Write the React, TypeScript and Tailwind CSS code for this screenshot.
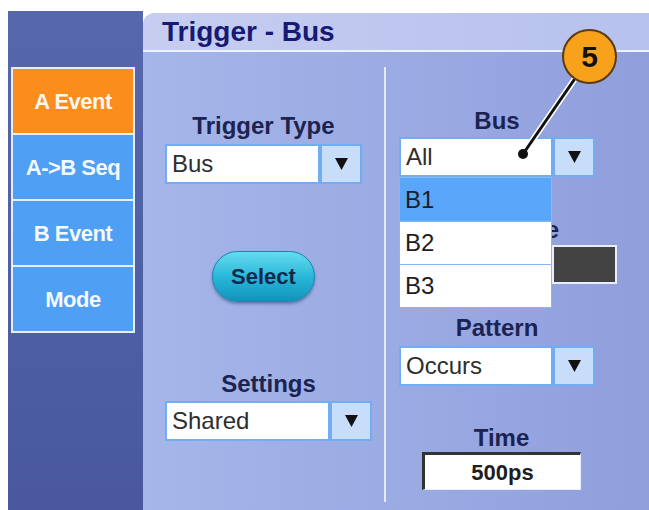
import React from 'react';

type DropdownProps = {
  value: string;
  boxClass: string;
  list?: string[];
};

const Arrow = () => (
  <svg width="13" height="12" viewBox="0 0 13 12">
    <polygon points="0,0 13,0 6.5,12" fill="#111" />
  </svg>
);

const Dropdown: React.FC<DropdownProps> = ({ value, boxClass, list }) => (
  <div className="relative flex h-[40px]">
    <div className={`${boxClass} flex items-center border-2 border-[#72acf2] bg-white pl-[5px] text-[24px] leading-none text-[#2e2e2e]`}>
      {value}
    </div>
    <div className="flex w-[42px] items-center justify-center border-2 border-[#72acf2] bg-[#c7ddf9]">
      <Arrow />
    </div>
    {list && (
      <div className="absolute left-0 top-[40px] z-10 w-[153px] border border-[#86b8f2] bg-white">
        {list.map((item, i) => (
          <div
            key={item}
            className={`flex h-[43px] items-center pl-[5px] text-[24px] leading-none text-[#1e1e1e] ${
              i === 0 ? 'bg-[#5aa6fa]' : 'border-t border-[#86b8f2] bg-white'
            }`}
          >
            {item}
          </div>
        ))}
      </div>
    )}
  </div>
);

const Label: React.FC<{ children: React.ReactNode; className?: string }> = ({ children, className = '' }) => (
  <div className={`h-[28px] text-center text-[24px] font-bold leading-[28px] text-[#1c2350] ${className}`}>{children}</div>
);

const tabs = ['A Event', 'A->B Seq', 'B Event', 'Mode'];

export default function App() {
  return (
    <div className="relative h-[510px] w-[649px] overflow-hidden bg-white font-['Liberation_Sans',Arial,sans-serif]">
      <div className="ml-2 mt-[11px] flex h-[499px]">
        {/* Side tabs */}
        <div className="w-[135px] bg-gradient-to-b from-[#5667ab] to-[#4a599f] pl-[3px] pt-[56px]">
          <div className="w-[124px] border-t-2 border-[#e6eefc]">
            {tabs.map((t, i) => (
              <div
                key={t}
                className={`flex h-[66px] items-center justify-center border-x-2 border-b-2 border-[#e6eefc] text-[22px] font-bold tracking-[-0.5px] text-white/95 ${
                  i === 0 ? 'bg-[#fb8d1c]' : 'bg-[#4f9ff5]'
                }`}
              >
                {t}
              </div>
            ))}
          </div>
        </div>

        {/* Main panel */}
        <div className="mt-[2px] flex flex-1 flex-col overflow-hidden rounded-tl-[12px] bg-gradient-to-r from-[#a5b6ea] to-[#909fdc]">
          <div className="flex h-[39px] items-center border-b-2 border-[#eef2fd] bg-gradient-to-r from-[#c6cdf1] to-[#b6c1ed] pl-[19px] text-[28px] font-bold text-[#161a72]">
            Trigger - Bus
          </div>

          <div className="flex flex-1">
            {/* Left column */}
            <div className="w-[241px] pl-[22px] pt-[60px]">
              <div className="w-[197px]">
                <Label>Trigger Type</Label>
                <div className="mt-[4px]">
                  <Dropdown value="Bus" boxClass="w-[155px]" />
                </div>
                <div className="mt-[67px] flex justify-center">
                  <div className="flex h-[51px] w-[103px] items-center justify-center rounded-full border border-[#1a86a8] bg-gradient-to-b from-[#62dcef] via-[#28b8da] to-[#1492bb] text-[22px] font-bold text-[#13284d] shadow-[0_2px_3px_rgba(30,50,110,0.45)]">
                    Select
                  </div>
                </div>
              </div>
              <div className="w-[207px]">
                <Label className="mt-[68px]">Settings</Label>
                <div className="mt-[3px]">
                  <Dropdown value="Shared" boxClass="w-[165px]" />
                </div>
              </div>
            </div>

            {/* Divider */}
            <div className="mb-[8px] mt-[15px] w-[2px] bg-[#e4eafb]" />

            {/* Right column */}
            <div className="flex-1 pl-[13px] pt-[55px]">
              <div className="w-[196px]">
                <Label>Bus</Label>
                <div className="mt-[2px]">
                  <Dropdown value="All" boxClass="w-[154px]" list={['B1', 'B2', 'B3']} />
                </div>
              </div>
              <div className="mt-[39px] h-[28px] w-[160px] text-right text-[24px] font-bold leading-[28px] text-[#1c2350]">
                Data Value
              </div>
              <div className="ml-[153px] mt-[1px] h-[39px] w-[65px] border-2 border-[#e8eefc] bg-[#434343]" />
              <div className="w-[196px]">
                <Label className="mt-[30px]">Pattern</Label>
                <div className="mt-[4px]">
                  <Dropdown value="Occurs" boxClass="w-[154px]" />
                </div>
              </div>
              <div className="ml-[23px] w-[159px]">
                <Label className="mt-[38px]">Time</Label>
                <div className="flex h-[38px] items-center justify-center border-l-[3px] border-t-[3px] border-b border-r border-l-[#333] border-t-[#333] border-b-[#e8eefc] border-r-[#e8eefc] bg-white text-[22px] font-bold text-[#1e1e1e]">
                  500ps
                </div>
              </div>
            </div>
          </div>
        </div>
      </div>

      {/* Callout */}
      <svg className="pointer-events-none absolute inset-0 z-20" width="649" height="510">
        <line x1="574" y1="80" x2="523" y2="154" stroke="#fff" strokeWidth="6" strokeLinecap="round" />
        <line x1="574" y1="80" x2="523" y2="154" stroke="#111" strokeWidth="3" strokeLinecap="round" />
        <circle cx="523" cy="154" r="5" fill="#111" />
      </svg>
      <div className="absolute left-[562px] top-[29px] z-30 flex h-[55px] w-[55px] items-center justify-center rounded-full border-2 border-[#5a3a12] bg-[#f8a21c] text-[30px] font-bold text-[#111]">
        5
      </div>
    </div>
  );
}
